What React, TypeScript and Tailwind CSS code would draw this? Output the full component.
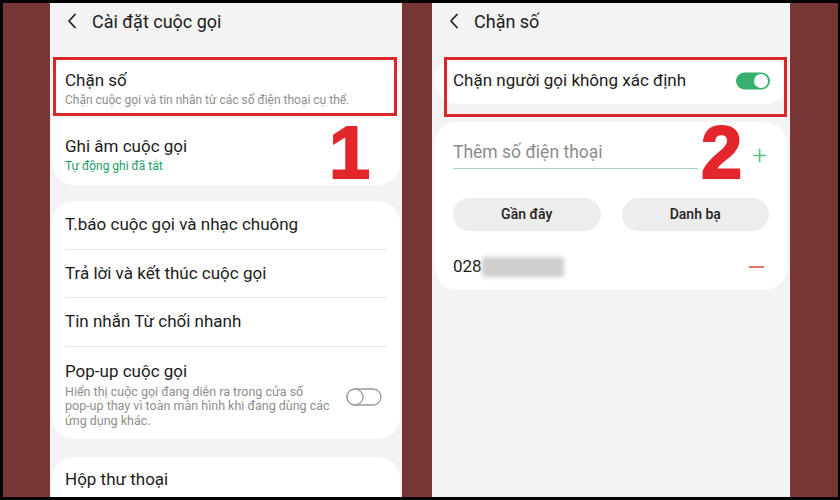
import type { ReactNode } from "react";

const font = { fontFamily: "Roboto, 'Noto Sans', sans-serif" };
const bigFont = { fontFamily: "'Liberation Sans', Arial, sans-serif" };

function Chevron() {
  return (
    <svg width="10" height="16" viewBox="0 0 10 16" fill="none">
      <polyline points="8,1.5 2,8 8,14.5" stroke="#222" strokeWidth="1.8" strokeLinecap="round" strokeLinejoin="round" />
    </svg>
  );
}

function Header({ title }: { title: string }) {
  return (
    <div className="flex h-9 items-center gap-[15px] pl-[17px]">
      <Chevron />
      <span className="text-[18px] text-[#1c1c1c]">{title}</span>
    </div>
  );
}

function Card({ children, className = "" }: { children: ReactNode; className?: string }) {
  return <div className={`mx-[2px] rounded-[22px] bg-white ${className}`}>{children}</div>;
}

function Row({ title }: { title: string }) {
  return (
    <div className="px-[13px]">
      <div className="flex h-[48.5px] items-center border-b border-[#e6e6e6] text-[17px] text-[#1c1c1c]">
        {title}
      </div>
    </div>
  );
}

function ToggleOff() {
  return (
    <svg width="36" height="18" viewBox="0 0 36 18" fill="none">
      <rect x="1" y="1" width="34" height="16" rx="8" stroke="#9a9a9a" strokeWidth="1.3" />
      <circle cx="9" cy="9" r="8" fill="white" stroke="#9a9a9a" strokeWidth="1.3" />
    </svg>
  );
}

function ToggleOn() {
  return (
    <svg width="34" height="18" viewBox="0 0 34 18" fill="none">
      <rect x="0" y="0.5" width="34" height="17" rx="8.5" fill="#36b06c" />
      <circle cx="25" cy="9" r="7" fill="white" />
    </svg>
  );
}

function BigNumber({ value, className }: { value: string; className: string }) {
  return (
    <div
      className={`absolute text-[74px] font-bold leading-none text-[#e3262b] [-webkit-text-stroke:2px_#e3262b] ${className}`}
      style={bigFont}
    >
      {value}
    </div>
  );
}

function LeftPhone() {
  return (
    <div className="relative flex w-[352px] flex-col bg-[#f3f3f3]">
      <Header title="Cài đặt cuộc gọi" />
      <Card className="mt-[17px]">
        <div className="px-[13px] pt-[13px] pb-[14px]">
          <div className="text-[17px] leading-[22px] text-[#1c1c1c]">Chặn số</div>
          <div className="mt-[1px] text-[12px] leading-[16px] text-[#8e8e8e]">
            Chặn cuộc gọi và tin nhắn từ các số điện thoại cụ thể.
          </div>
        </div>
        <div className="px-[13px] pt-[13px] pb-[11px]">
          <div className="text-[17px] leading-[22px] text-[#1c1c1c]">Ghi âm cuộc gọi</div>
          <div className="mt-[1px] text-[12px] leading-[16px] text-[#1a9c68]">Tự động ghi đã tắt</div>
        </div>
      </Card>
      <Card className="mt-[16px]">
        <Row title="T.báo cuộc gọi và nhạc chuông" />
        <Row title="Trả lời và kết thúc cuộc gọi" />
        <Row title="Tin nhắn Từ chối nhanh" />
        <div className="flex items-center justify-between px-[13px] pt-[13px] pb-[11px]">
          <div>
            <div className="text-[17px] leading-[22px] text-[#1c1c1c]">Pop-up cuộc gọi</div>
            <div className="mt-[3px] text-[12.5px] leading-[14.5px] text-[#8e8e8e]">
              Hiển thị cuộc gọi đang diễn ra trong cửa số
              <br />
              pop-up thay vì toàn màn hình khi đang dùng các
              <br />
              ứng dụng khác.
            </div>
          </div>
          <div className="mr-[5px] mt-[6px]">
            <ToggleOff />
          </div>
        </div>
      </Card>
      <Card className="mt-[18px] flex-1 rounded-b-none">
        <div className="px-[13px] pt-[11px] text-[17px] leading-[22px] text-[#1c1c1c]">Hộp thư thoại</div>
      </Card>

      <div className="absolute left-[3px] top-[54px] h-[59px] w-[344px] border-[3px] border-[#d8282c]" />
      <BigNumber value="1" className="left-[279px] top-[113px]" />
    </div>
  );
}

function Pill({ label }: { label: string }) {
  return (
    <div className="flex h-[33px] flex-1 items-center justify-center rounded-full bg-[#ededed] text-[14px] font-medium text-[#222]">
      {label}
    </div>
  );
}

function RightPhone() {
  return (
    <div className="relative flex w-[358px] flex-col bg-[#f3f3f3]">
      <Header title="Chặn số" />
      <div className="mx-[3px] mt-[18px] flex h-[47px] items-center justify-between rounded-[22px] bg-white pl-[18px] pr-[17px]">
        <span className="text-[17px] text-[#1c1c1c]">Chặn người gọi không xác định</span>
        <ToggleOn />
      </div>
      <div className="mx-[3px] mt-[18px] rounded-[22px] bg-white px-[18px] pt-[18px] pb-[11px]">
        <div className="flex items-center">
          <div className="w-[245px] border-b-[1.5px] border-[#a9d3bc] pb-[4px] text-[17.5px] leading-[24px] text-[#8c8c8c]">
            Thêm số điện thoại
          </div>
          <div className="ml-auto mr-[2px] text-[26px] font-light leading-none text-[#5cbc88]">+</div>
        </div>
        <div className="mt-[29px] flex gap-[21px]">
          <Pill label="Gần đây" />
          <Pill label="Danh bạ" />
        </div>
        <div className="mt-[24px] flex h-[24px] items-center justify-between">
          <div className="flex items-center text-[17px] text-[#1c1c1c]">
            <span>028</span>
            <span className="h-[20px] w-[82px] rounded-[3px] bg-[#cfcfcf] blur-[2px]" />
          </div>
          <div className="mr-[5px] h-[2px] w-[15px] bg-[#e37660]" />
        </div>
      </div>

      <div className="absolute left-[12px] top-[54px] h-[60px] w-[343px] border-[3px] border-[#d8282c]" />
      <BigNumber value="2" className="left-[269px] top-[113px]" />
    </div>
  );
}

export default function App() {
  return (
    <div className="h-[500px] w-[840px] bg-black pt-[3px] pb-[3px] pl-[3px] pr-[2px]" style={font}>
      <div className="flex h-full bg-[#773535] pl-[47px]">
        <LeftPhone />
        <div className="w-[30px]" />
        <RightPhone />
      </div>
    </div>
  );
}
